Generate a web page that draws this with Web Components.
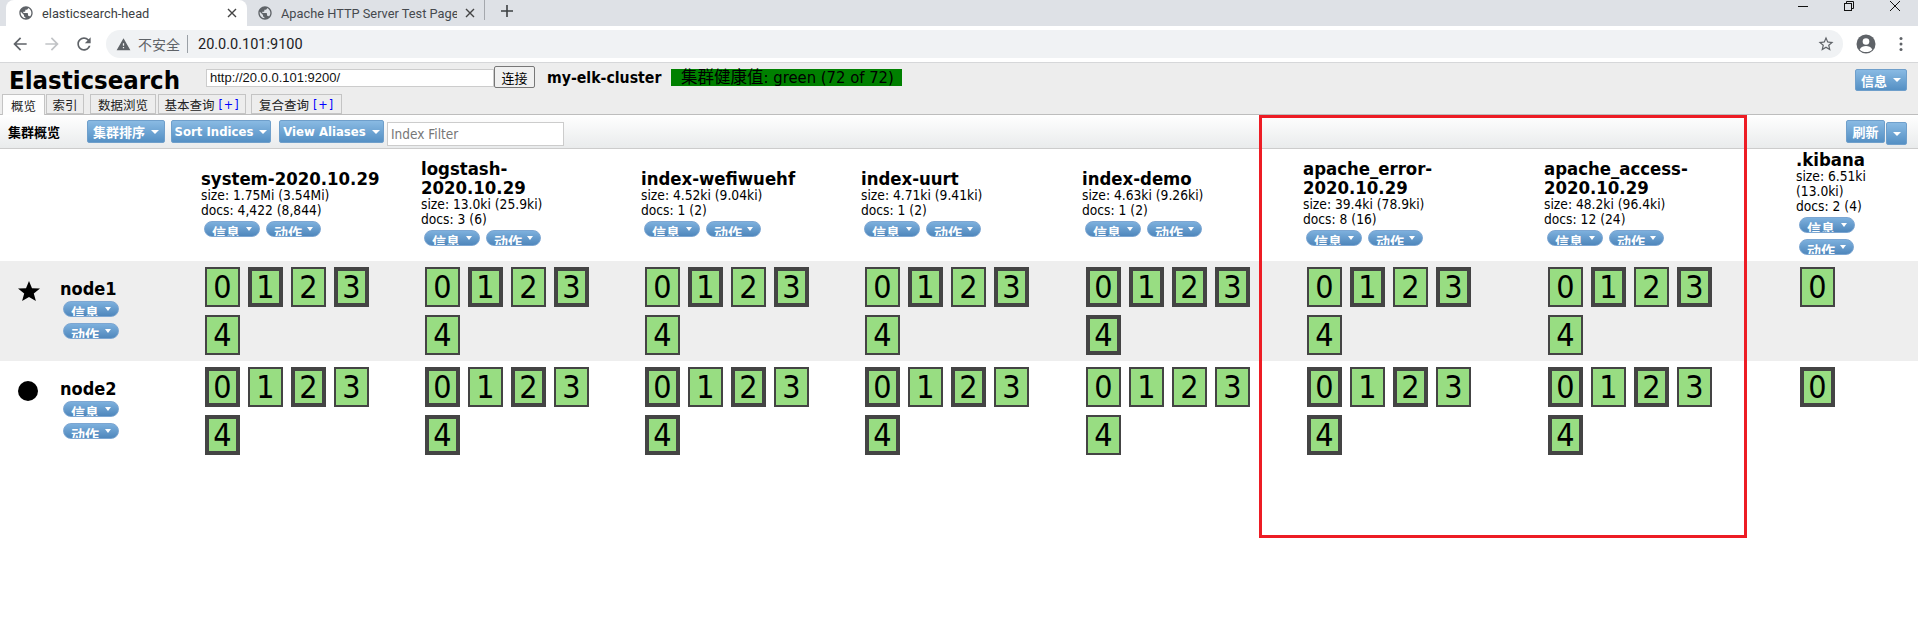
<!DOCTYPE html>
<html lang="zh"><head><meta charset="utf-8"><title>elasticsearch-head</title>
<style>
html,body{margin:0;padding:0;background:#fff;overflow:hidden;width:1918px;height:624px}
body{position:relative;font-family:"DejaVu Sans Condensed","DejaVu Sans","Noto Sans CJK SC",sans-serif;color:#000}
</style></head><body>
<browser-bar></browser-bar>
<es-header></es-header>
<es-toolbar></es-toolbar>
<es-overview></es-overview>
<red-mark></red-mark>
<script>
const UI='"DejaVu Sans Condensed","DejaVu Sans","Noto Sans CJK SC",sans-serif';
const P={
 globe:'M12 2C6.48 2 2 6.48 2 12s4.48 10 10 10 10-4.48 10-10S17.52 2 12 2zm-1 17.93c-3.95-.49-7-3.85-7-7.93 0-.62.08-1.21.21-1.79L9 15v1c0 1.1.9 2 2 2v1.93zm6.9-2.54c-.26-.81-1-1.39-1.9-1.39h-1v-3c0-.55-.45-1-1-1H8v-2h2c.55 0 1-.45 1-1V7h2c1.1 0 2-.9 2-2v-.41c2.93 1.19 5 4.06 5 7.41 0 2.08-.8 3.97-2.1 5.39z',
 back:'M20 11H7.83l5.59-5.59L12 4l-8 8 8 8 1.41-1.41L7.83 13H20v-2z',
 fwd:'M12 4l-1.41 1.41L16.17 11H4v2h12.17l-5.58 5.59L12 20l8-8z',
 reload:'M17.65 6.35C16.2 4.9 14.21 4 12 4c-4.42 0-7.99 3.58-7.99 8s3.57 8 7.99 8c3.73 0 6.84-2.55 7.73-6h-2.08c-.82 2.33-3.04 4-5.65 4-3.31 0-6-2.69-6-6s2.69-6 6-6c1.66 0 3.14.69 4.22 1.78L13 11h7V4l-2.35 2.35z',
 warn:'M1 21h22L12 2 1 21zm12-3h-2v-2h2v2zm0-4h-2v-4h2v4z',
 star:'M22 9.24l-7.19-.62L12 2 9.19 8.63 2 9.24l5.46 4.73L5.82 21 12 17.27 18.18 21l-1.63-7.03L22 9.24zM12 15.4l-3.76 2.27 1-4.28-3.32-2.88 4.38-.38L12 6.1l1.71 4.04 4.38.38-3.32 2.88 1 4.28L12 15.4z'
};
const svg=(d,s,c)=>`<svg width="${s}" height="${s}" viewBox="0 0 24 24" fill="${c}" style="display:block;flex:none"><path d="${d}"/></svg>`;
class Base extends HTMLElement{
  constructor(){super();this.attachShadow({mode:'open'});}
  render(h){this.shadowRoot.innerHTML=h;}
}
class ChromeTab extends Base{connectedCallback(){
  const a=this.hasAttribute('active');
  this.render(`<style>
  :host{display:flex;align-items:center;height:26px;box-sizing:border-box;position:relative;font:12.800px Roboto,"Noto Sans",sans-serif;color:${a?'#3c4043':'#45494e'}}
  .t{flex:1;white-space:nowrap;overflow:hidden;margin-left:8px;min-width:0}
  .x{flex:none;width:10px;height:10px;margin-left:8px}
  </style>${svg(P.globe,16,'#5f6368')}<span class="t"><slot></slot></span>
  <svg class="x" viewBox="0 0 10 10" stroke="#444" stroke-width="1.4"><path d="M1 1l8 8M9 1l-8 8"/></svg>`);
}}
customElements.define('chrome-tab',ChromeTab);
class BrowserBar extends Base{connectedCallback(){this.render(`<style>
  :host{display:block;height:63px;box-sizing:border-box;border-bottom:1px solid #d6d7d9;background:#fff}
  .strip{height:26px;background:#dee1e6;display:flex;align-items:flex-start;position:relative}
  .active{margin-left:6px;width:241px;height:26px;background:#fff;border-radius:8px 8px 0 0;padding:0 10px 0 12px;box-sizing:border-box;flex:none}
  .second{margin-left:10px;width:218px;flex:none}
  .sep{width:1px;height:20px;background:#a5a8ad;margin:0 0 0 9px;flex:none}
  .plus{margin-left:14px;flex:none;margin-top:3px}
  .win{margin-left:auto;display:flex;gap:0;flex:none}
  .win svg{display:block;width:46px;height:20px}
  .tool{height:36px;display:flex;align-items:center;position:relative}
  .nav{display:flex;align-items:center;width:106px;flex:none;padding-left:10px;box-sizing:border-box;gap:12px}
  .omni{flex:none;width:1737px;height:28px;border-radius:14px;background:#f0f2f4;display:flex;align-items:center;box-sizing:border-box;padding-left:10px;font:13.500px Roboto,"Noto Sans CJK SC",sans-serif}
  .ins{color:#5f6368;margin-left:7px;font-family:"Noto Sans CJK SC",sans-serif;font-size:14px}
  .bar{width:1px;height:18px;background:#9aa0a6;margin:0 10px 0 7px}
  .url{color:#202124;font-size:14.500px}
  .st{margin-left:auto;margin-right:8px}
  .right{display:flex;align-items:center;flex:none}
  .dots{margin-left:23px}
  </style>
  <div class="strip">
    <div class="active"><chrome-tab active>elasticsearch-head</chrome-tab></div>
    <div class="second"><chrome-tab>Apache HTTP Server Test Page</chrome-tab></div>
    <div class="sep"></div>
    <svg class="plus" width="16" height="16" viewBox="0 0 16 16" stroke="#3c4043" stroke-width="1.6"><path d="M8 2v12M2 8h12"/></svg>
    <div class="win">
      <svg viewBox="0 0 46 20" stroke="#111" fill="none"><path d="M18 6.500h10"/></svg>
      <svg viewBox="0 0 46 20" stroke="#111" fill="none"><rect x="18.500" y="3.500" width="7" height="7"/><path d="M20.500 3.500V1.500h7v7h-2"/></svg>
      <svg viewBox="0 0 46 20" stroke="#111" fill="none"><path d="M18 1l10 10M28 1L18 11"/></svg>
    </div>
  </div>
  <div class="tool">
    <div class="nav">${svg(P.back,20,'#5f6368')}${svg(P.fwd,20,'#c1c3c6')}${svg(P.reload,20,'#5f6368')}</div>
    <div class="omni">${svg(P.warn,15,'#5f6368')}<span class="ins">不安全</span><span class="bar"></span><span class="url">20.0.0.101:9100</span><span class="st">${svg(P.star,18,'#5f6368')}</span></div>
    <div class="right">
      <svg width="20" height="20" viewBox="0 0 20 20" style="margin-left:13px"><circle cx="10" cy="10" r="9.500" fill="#5f6368"/><circle cx="10" cy="7.500" r="3.300" fill="#fff"/><path d="M3.700 15.500C5 12.800 7.500 12 10 12s5 .8 6.300 3.500C14.800 17.500 12.500 18 10 18s-4.800-.5-6.300-2.500z" fill="#fff"/></svg>
      <svg class="dots" width="4" height="16" viewBox="0 0 4 16" fill="#5f6368"><circle cx="2" cy="2.500" r="1.500"/><circle cx="2" cy="8" r="1.500"/><circle cx="2" cy="13.500" r="1.500"/></svg>
    </div>
  </div>`);}}
customElements.define('browser-bar',BrowserBar);

class BlueButton extends Base{connectedCallback(){
  const nc=this.hasAttribute('nocaret'),only=this.hasAttribute('caretonly');
  this.render(`<style>
  :host{display:inline-flex;align-items:center;justify-content:center;box-sizing:border-box;height:23px;padding:0 ${only?'0':'6px'};gap:6px;
   border:1px solid #6f9fcb;border-radius:2px;background:linear-gradient(#89bae3,#5590c4);color:#fff;font:bold 13px ${UI};white-space:nowrap;flex:none}
  i{display:block;width:0;height:0;border:4px solid transparent;border-top:4px solid #fff;border-bottom:0}
  </style><slot></slot>${nc?'':'<i></i>'}`);
}}
customElements.define('blue-button',BlueButton);

class PillButton extends Base{connectedCallback(){
  this.render(`<style>
  :host{display:inline-flex;align-items:flex-start;box-sizing:border-box;height:16px;overflow:hidden;border:1px solid #7ca6d2;border-radius:8px;
   background:linear-gradient(#7db0dd,#4f87bc);color:#fff;font:bold 14px "Noto Sans CJK SC",sans-serif;line-height:17px;padding:0 7px 0 7px;flex:none;width:56px;white-space:nowrap}
  span{display:block;margin-top:2px}
  i{display:block;width:0;height:0;border:3.500px solid transparent;border-top:4px solid #fff;border-bottom:0;margin:5px 0 0 auto}
  </style><span><slot></slot></span><i></i>`);
}}
customElements.define('pill-button',PillButton);

class EsHeader extends Base{connectedCallback(){this.render(`<style>
  :host{display:block;height:52px;box-sizing:border-box;background:#ededed;border-bottom:1px solid #bdbdbd;font-family:${UI}}
  .top{display:flex;align-items:flex-start;height:31px;padding:3px 11px 0 0;box-sizing:border-box}
  h1{margin:1px 0 0;flex:0 0 206px;box-sizing:border-box;padding-left:9px;font:bold 25.500px/26px ${UI};white-space:nowrap}
  .inp{width:288px;height:18px;margin-top:3px;box-sizing:border-box;background:#fff;border:1px solid #ccc;font:13px/16px "Liberation Sans",sans-serif;padding-left:3px;flex:none;color:#111}
  .con{width:41px;height:22px;box-sizing:border-box;border:1px solid #777;border-radius:2px;background:#f0f0f0;display:flex;align-items:center;justify-content:center;font:13px "Noto Sans CJK SC",sans-serif;flex:none}
  .cl{margin:3px 0 0 12px;flex:0 0 124px;font:bold 15.700px/18px ${UI};white-space:nowrap}
  .hl{width:231px;height:17px;margin-top:3px;background:#008000;font:16.500px/17px ${UI};padding-left:10px;box-sizing:border-box;flex:none;white-space:nowrap}
  .inf{margin:3px 0 0 auto;width:52px;height:22px}
  .tabs{display:flex;align-items:flex-end;height:20px;padding-left:2px}
  </style>
  <div class="top"><h1>Elasticsearch</h1><div class="inp">http://20.0.0.101:9200/</div><div class="con">连接</div><div class="cl">my-elk-cluster</div><div class="hl">集群健康值: green (72 of 72)</div><blue-button class="inf">信息</blue-button></div>
  <div class="tabs">
   <es-tab active style="width:43px">概览</es-tab><es-tab style="width:38px;margin-left:1px">索引</es-tab><es-tab style="width:66px;margin-left:6px">数据浏览</es-tab><es-tab style="width:88px;margin-left:2px">基本查询 <b>[+]</b></es-tab><es-tab style="width:91px;margin-left:5px">复合查询 <b>[+]</b></es-tab>
  </div>`);}}
customElements.define('es-header',EsHeader);
class EsTab extends Base{connectedCallback(){const a=this.hasAttribute('active');this.render(`<style>
  :host{display:flex;align-items:center;justify-content:center;box-sizing:border-box;height:${a?21:20}px;${a?'margin-bottom:-1px;':''}background:${a?'#fdfdfd':'#ededed'};border:1px solid #c4c4c4;border-bottom:${a?'0':'1px solid #c4c4c4'};font:12.500px "Noto Sans CJK SC",sans-serif;color:#222;white-space:nowrap;flex:none}
  ::slotted(b){font-weight:normal;color:#00f;margin-left:4px;letter-spacing:1px;font-family:"DejaVu Sans Condensed",sans-serif}
  </style><slot></slot>`);}}
customElements.define('es-tab',EsTab);

class EsToolbar extends Base{connectedCallback(){this.render(`<style>
  :host{display:flex;align-items:flex-start;height:34px;box-sizing:border-box;background:linear-gradient(#fff,#e9ebec);border-bottom:1px solid #ccc;padding:5px 11px 0 8px;font-family:${UI}}
  .lab{font:bold 13px/23px "Noto Sans CJK SC",sans-serif;flex:0 0 79px}
  .f{margin:2px 0 0 3px;width:177px;height:24px;box-sizing:border-box;border:1px solid #ccc;background:#fff;color:#777;font:13.500px/22px ${UI};padding-left:3px}
  .r{margin-left:auto;display:flex;align-items:flex-start;gap:1px}
  </style>
  <div class="lab">集群概览</div>
  <blue-button style="width:78px">集群排序</blue-button>
  <blue-button style="width:100px;margin-left:6px">Sort Indices</blue-button>
  <blue-button style="width:105px;margin-left:8px">View Aliases</blue-button>
  <div class="f">Index Filter</div>
  <div class="r"><blue-button nocaret style="width:39px">刷新</blue-button><blue-button caretonly style="width:21px;margin-top:2px"></blue-button></div>`);}}
customElements.define('es-toolbar',EsToolbar);

class ShardBox extends Base{connectedCallback(){const t=this.hasAttribute('primary');this.render(`<style>
  :host{display:flex;align-items:center;justify-content:center;width:35px;height:40px;box-sizing:border-box;border:${t?4:2}px solid #444;background:#98dd82;font:32px/1 ${UI};color:#000;flex:none}
  </style><slot></slot>`);}}
customElements.define('shard-box',ShardBox);

class IndexHead extends Base{connectedCallback(){const w=this.getAttribute('w')||185;this.render(`<style>
  :host{display:flex;flex-direction:column;align-self:center;width:${w}px;box-sizing:border-box;padding-bottom:2px;font-family:${UI}}
  .n{font:bold 18.400px/19px ${UI}}
  .s{font:13.700px/15px ${UI}}
  .b{display:flex;flex-wrap:wrap;column-gap:6px;padding-left:3px}
  pill-button{margin:3px 0}
  </style><div class="n">${this.getAttribute('name')}</div><div class="s">size: ${this.getAttribute('size')}</div><div class="s">docs: ${this.getAttribute('docs')}</div>
  <div class="b"><pill-button>信息</pill-button><pill-button style="width:55px">动作</pill-button></div>`);}}
customElements.define('index-head',IndexHead);

class NodeCell extends Base{connectedCallback(){const star=this.hasAttribute('master');this.render(`<style>
  :host{display:flex;padding:18px 0 0 18px;box-sizing:border-box;font-family:${UI}}
  .ic{flex:0 0 42px;margin-top:2px}
  .c{display:flex;flex-direction:column;align-items:flex-start}
  .n{font:bold 18px/19px ${UI}}
  pill-button{margin:3px 0 3px 3px}
  </style><div class="ic">${star?'<svg width="22" height="20" viewBox="0 0 22 20"><path d="M11 0l3 7.200 8 .4-6.200 5 2.100 7.400L11 16l-6.900 4 2.100-7.400L0 7.600l8-.4z"/></svg>':'<svg width="20" height="20" viewBox="0 0 20 20"><circle cx="10" cy="10" r="10"/></svg>'}</div>
  <div class="c"><div class="n">${this.getAttribute('name')}</div><pill-button>信息</pill-button><pill-button>动作</pill-button></div>`);}}
customElements.define('node-cell',NodeCell);

class ShardSet extends Base{connectedCallback(){
  const p=this.getAttribute('primary')||'';const n=+this.getAttribute('count');
  let h='';for(let i=0;i<n;i++)h+=`<shard-box ${p.includes(i)?'primary':''}>${i}</shard-box>`;
  this.render(`<style>:host{display:flex;flex-wrap:wrap;gap:8px;width:172px;padding:6px 0 0 4px;align-content:flex-start}</style>${h}`);
}}
customElements.define('shard-set',ShardSet);

class OverviewRow extends Base{connectedCallback(){const s=this.hasAttribute('shaded');const h=this.getAttribute('h');this.render(`<style>
  :host{display:grid;grid-template-columns:201px 220px 220px 220px 221px 221px 241px 252px 122px;height:${h}px;background:${s?'#eee':'#fff'}}
  </style><slot></slot>`);}}
customElements.define('overview-row',OverviewRow);

const IDX=[
 ['system-2020.10.29','1.75Mi (3.54Mi)','4,422 (8,844)',5,'13','024'],
 ['logstash-2020.10.29','13.0ki (25.9ki)','3 (6)',5,'13','024'],
 ['index-wefiwuehf','4.52ki (9.04ki)','1 (2)',5,'13','024'],
 ['index-uurt','4.71ki (9.41ki)','1 (2)',5,'13','024'],
 ['index-demo','4.63ki (9.26ki)','1 (2)',5,'01234',''],
 ['apache_error-2020.10.29','39.4ki (78.9ki)','8 (16)',5,'13','024'],
 ['apache_access-2020.10.29','48.2ki (96.4ki)','12 (24)',5,'13','024'],
 ['.kibana','6.51ki (13.0ki)','2 (4)',1,'','0']
];
class EsOverview extends Base{connectedCallback(){
  const head=IDX.map((d,i)=>`<index-head name="${d[0]}" size="${d[1]}" docs="${d[2]}" ${i==7?'w="118"':''}></index-head>`).join('');
  const row=k=>IDX.map(d=>`<shard-set count="${d[3]}" primary="${d[k]}"></shard-set>`).join('');
  this.render(`<style>:host{display:block}</style>
  <overview-row h="112"><div></div>${head}</overview-row>
  <overview-row h="100" shaded><node-cell name="node1" master></node-cell>${row(4)}</overview-row>
  <overview-row h="100"><node-cell name="node2"></node-cell>${row(5)}</overview-row>`);
}}
customElements.define('es-overview',EsOverview);

class RedMark extends Base{connectedCallback(){this.render(`<style>
  :host{position:absolute;left:1259px;top:115px;width:488px;height:423px;box-sizing:border-box;border:3px solid #ed1c24;pointer-events:none}
  </style>`);}}
customElements.define('red-mark',RedMark);
</script>
</body></html>
